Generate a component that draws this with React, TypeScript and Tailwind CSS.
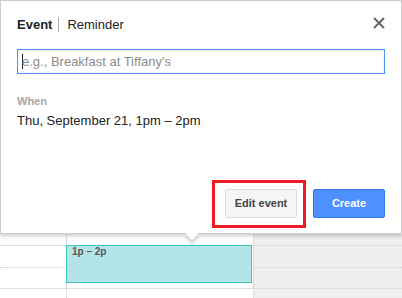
import React from "react";

function CloseIcon() {
  return (
    <svg width="12" height="12" viewBox="0 0 12 12" className="block">
      <path d="M1 1L11 11M11 1L1 11" stroke="#666" strokeWidth="2" />
    </svg>
  );
}

function QuickAddPopup() {
  return (
    <div className="relative z-10 h-[234px] shrink-0 flex flex-col px-4 bg-white border border-[#ccc] shadow-[0_2px_4px_rgba(0,0,0,0.2)]">
      {/* Tabs + close */}
      <div className="mt-[16px] h-[15px] flex items-center text-[13px] leading-[15px] text-[#222]">
        <span className="font-bold">Event</span>
        <span className="ml-[6px] h-[15px] border-l border-[#aaa]" />
        <span className="pl-[8px]">Reminder</span>
        <span className="ml-auto self-start">
          <CloseIcon />
        </span>
      </div>

      {/* Title input */}
      <div className="mt-[17px] h-[25px] flex items-center px-[4px] border border-[#4d90fe] shadow-[inset_0_1px_2px_rgba(0,0,0,0.1)] text-[13px] text-[#8c8c8c]">
        <span className="w-px h-[15px] -mr-px bg-[#222]" />
        <span>e.g., Breakfast at Tiffany's</span>
      </div>

      {/* When */}
      <div className="mt-[21px] text-[11px] leading-[13px] font-bold text-[#a6a6a6]">When</div>
      <div className="mt-[5px] text-[13px] leading-[16px] text-[#222]">Thu, September 21, 1pm – 2pm</div>

      {/* Actions */}
      <div className="mt-auto mb-[5px] flex items-end justify-end">
        <div className="border-[3px] border-[#ed1c24] pt-[6px] pb-[7px] pl-[10px] pr-[6px]">
          <button className="w-[72px] h-[29px] rounded-[2px] border border-[#dcdcdc] bg-[#f5f5f5] text-[11px] font-bold text-[#444]">
            Edit event
          </button>
        </div>
        <button className="ml-[7px] mb-[10px] w-[72px] h-[29px] rounded-[2px] border border-[#3079ed] bg-[#4d90fe] text-[11px] font-bold text-white">
          Create
        </button>
      </div>

      {/* Pointer notch */}
      <div className="absolute left-[186px] top-[229px] w-[10px] h-[10px] rotate-45 bg-white border-r border-b border-[#ccc] shadow-[2px_2px_3px_rgba(0,0,0,0.12)]" />
    </div>
  );
}

function CalendarGrid() {
  return (
    <div className="flex-1 flex">
      <div className="w-[67px] border-r border-[#ddd] bg-white">
        <div className="h-[11px]" />
        <div className="h-[22px] border-t border-[#ddd]" />
        <div className="h-[21px] border-t border-dotted border-[#ccc]" />
        <div className="h-[10px] border-t border-[#ddd]" />
      </div>
      <div className="w-[187px] border-r border-[#ddd] bg-white">
        <div className="h-[11px]" />
        <div className="-ml-px w-[186px] h-[38px] border border-[#3cc4b8] bg-[#b3e5e8] pl-[5px] text-[10px] leading-[12px] font-bold text-[#555]">
          1p – 2p
        </div>
        <div className="mt-[5px] h-[10px] border-t border-[#ddd]" />
      </div>
      <div className="flex-1 bg-[#efefef]">
        <div className="h-[11px]" />
        <div className="h-[22px] border-t border-[#ddd]" />
        <div className="h-[21px] border-t border-dotted border-[#d6d6d6]" />
        <div className="h-[10px] border-t border-[#ddd]" />
      </div>
    </div>
  );
}

export default function App() {
  return (
    <div className="w-[402px] h-[298px] overflow-hidden flex flex-col bg-white font-['Liberation_Sans',Arial,sans-serif]">
      <QuickAddPopup />
      <CalendarGrid />
    </div>
  );
}
